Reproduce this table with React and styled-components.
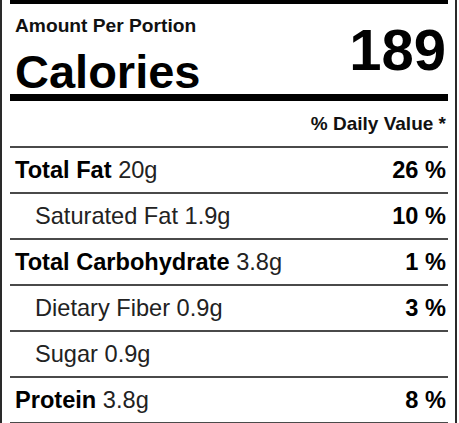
import React from "react";
import styled, { createGlobalStyle } from "styled-components";

const Global = createGlobalStyle`
  html, body { margin: 0; padding: 0; background: #fff; }
  body { font-family: "Liberation Sans", Arial, sans-serif; }
`;

const Panel = styled.div`
  box-sizing: border-box;
  width: 457px;
  height: 423px;
  overflow: hidden;
  border-left: 2px solid #2a2a2a;
  border-right: 2px solid #2a2a2a;
  padding: 0 7px 0 8px;
  color: #111;
`;

const ThickBar = styled.div`
  height: ${(p) => p.$h}px;
  background: #000;
`;

const Header = styled.div`
  display: flex;
  justify-content: space-between;
  align-items: flex-start;
`;

const HeaderLeft = styled.div`
  display: flex;
  flex-direction: column;
  padding-left: 5px;
`;

const Amount = styled.div`
  margin-top: 11px;
  font-size: 19.2px;
  line-height: 22px;
  font-weight: 700;
`;

const CaloriesLabel = styled.div`
  margin-top: 12px;
  font-size: 47px;
  line-height: 45px;
  font-weight: 700;
  color: #000;
`;

const CaloriesValue = styled.div`
  margin-top: 17px;
  padding-right: 2px;
  font-size: 58px;
  line-height: 58px;
  font-weight: 700;
  color: #000;
`;

const DVRow = styled.div`
  padding: 12px 2px 11px 0;
  text-align: right;
  font-size: 19px;
  line-height: 22px;
  font-weight: 700;
`;

const Row = styled.div`
  display: flex;
  justify-content: space-between;
  align-items: center;
  height: 44px;
  border-top: 2px solid #4a4a4a;
  padding: 0 2px 0 ${(p) => (p.$indent ? 25 : 5)}px;
  font-size: 23.6px;
`;

const Name = styled.span`
  font-weight: 700;
  color: #000;
`;

const Amt = styled.span`
  color: #222;
`;

const Pct = styled.span`
  font-weight: 700;
  color: #000;
`;

const rows = [
  { name: "Total Fat", amount: "20g", pct: "26 %" },
  { name: "Saturated Fat", amount: "1.9g", pct: "10 %", indent: true },
  { name: "Total Carbohydrate", amount: "3.8g", pct: "1 %" },
  { name: "Dietary Fiber", amount: "0.9g", pct: "3 %", indent: true },
  { name: "Sugar", amount: "0.9g", indent: true },
  { name: "Protein", amount: "3.8g", pct: "8 %" },
];

export default function App() {
  return (
    <>
      <Global />
      <Panel>
        <ThickBar $h={4} />
        <Header>
          <HeaderLeft>
            <Amount>Amount Per Portion</Amount>
            <CaloriesLabel>Calories</CaloriesLabel>
          </HeaderLeft>
          <CaloriesValue>189</CaloriesValue>
        </Header>
        <ThickBar $h={7} />
        <DVRow>% Daily Value *</DVRow>
        {rows.map((r) => (
          <Row key={r.name} $indent={r.indent}>
            <span>
              {r.indent ? (
                <Amt>
                  {r.name} {r.amount}
                </Amt>
              ) : (
                <>
                  <Name>{r.name}</Name> <Amt>{r.amount}</Amt>
                </>
              )}
            </span>
            {r.pct && <Pct>{r.pct}</Pct>}
          </Row>
        ))}
        <Row />
      </Panel>
    </>
  );
}
